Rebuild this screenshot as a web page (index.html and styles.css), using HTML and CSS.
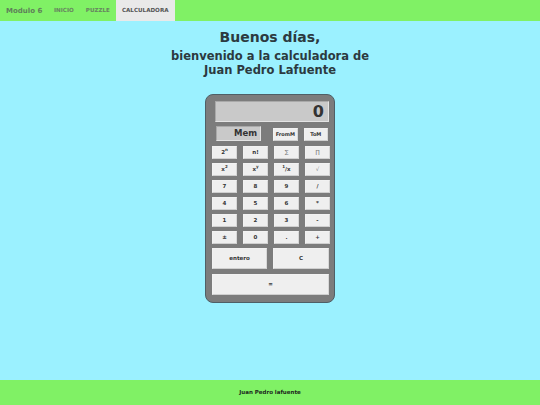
FILE: index.html
```html
<!DOCTYPE html>
<html lang="es">
<head>
<meta charset="utf-8">
<title>Calculadora</title>
<link rel="stylesheet" href="styles.css">
</head>
<body>
<header class="nav">
  <span class="brand">Modulo 6</span>
  <a class="link">INICIO</a>
  <a class="link">PUZZLE</a>
  <a class="link active">CALCULADORA</a>
</header>
<main class="main">
  <h1 class="hello">Buenos días,</h1>
  <h2 class="welcome">bienvenido a la calculadora de<br>Juan Pedro Lafuente</h2>
  <div class="calc">
    <div class="screen">0</div>
    <div class="memrow">
      <div class="mem">Mem</div>
      <button class="key mbtn">FromM</button>
      <button class="key mbtn">ToM</button>
    </div>
    <div class="keys">
      <button class="key">2<sup>n</sup></button><button class="key">n!</button><button class="key light">∑</button><button class="key light">∏</button>
      <button class="key">x<sup>2</sup></button><button class="key">x<sup>y</sup></button><button class="key"><sup>1</sup>/x</button><button class="key light">√</button>
      <button class="key">7</button><button class="key">8</button><button class="key">9</button><button class="key">/</button>
      <button class="key">4</button><button class="key">5</button><button class="key">6</button><button class="key">*</button>
      <button class="key">1</button><button class="key">2</button><button class="key">3</button><button class="key">-</button>
      <button class="key">±</button><button class="key">0</button><button class="key">.</button><button class="key">+</button>
    </div>
    <div class="bottom">
      <button class="key big">entero</button>
      <button class="key big">C</button>
      <button class="key big wide">=</button>
    </div>
  </div>
</main>
<footer class="foot">Juan Pedro lafuente</footer>
</body>
</html>
```
FILE: styles.css
```css
* { box-sizing: border-box; }
html, body { margin: 0; height: 100%; }
body {
  display: flex;
  flex-direction: column;
  height: 405px;
  overflow: hidden;
  background: #9bf1ff;
  font-family: "DejaVu Sans", sans-serif;
  color: #2c3a40;
}
.nav {
  display: flex;
  align-items: center;
  height: 21px;
  background: #80f165;
  padding-left: 6px;
}
.brand { font-size: 7px; color: #5f7f5a; font-weight: 700; width: 42px; white-space: nowrap; }
.link {
  font-size: 5.6px;
  font-weight: 700;
  color: #678460;
  padding: 0 6px;
  line-height: 21px;
  white-space: nowrap;
}
.link.active { background: #e9e9e9; color: #555; }
.main { flex: 1; display: flex; flex-direction: column; align-items: center; }
.hello { margin: 7px 0 0; font-size: 14px; line-height: 18px; font-weight: 700; }
.welcome { margin: 3px 0 0; font-size: 11.5px; line-height: 14px; font-weight: 700; text-align: center; }
.calc {
  width: 130px;
  height: 209px;
  margin-top: 17px;
  background: #7c7c7c;
  border: 1px solid #4f5f66;
  border-radius: 8px;
  padding: 6px;
  display: flex;
  flex-direction: column;
}
.screen {
  height: 21px;
  margin: 0 0 0 3px;
  width: 114px;
  background: #c9c9c9;
  border: 1px solid #a9a9a9;
  border-right-color: #e4e4e4;
  border-bottom-color: #e4e4e4;
  font-size: 16px;
  line-height: 19px;
  font-weight: 700;
  text-align: right;
  padding-right: 4px;
  color: #333;
}
.memrow { display: flex; gap: 6px; margin: 4px 0 0 4px; align-items: flex-end; }
.mem {
  width: 46px;
  height: 15px;
  margin-right: 6px;
  background: #c9c9c9;
  border: 1px solid #a9a9a9;
  border-right-color: #e4e4e4;
  border-bottom-color: #e4e4e4;
  font-size: 8.5px;
  line-height: 13px;
  font-weight: 700;
  text-align: right;
  padding-right: 3px;
  color: #333;
}
.key {
  margin: 0;
  padding: 0;
  border: 1px solid #f2f2f2;
  border-right-color: #d8d8d8;
  border-bottom-color: #cfcfcf;
  background: #efefef;
  font-family: "DejaVu Sans", sans-serif;
  font-size: 5.5px;
  font-weight: 700;
  color: #333;
  height: 13px;
  line-height: 1;
}
.key sup { font-size: 4px; line-height: 0; }
.key.light { font-weight: 400; color: #777; }
.mbtn { width: 25px; height: 13px; font-size: 5px; }
.keys { display: grid; grid-template-columns: repeat(4, 25px); column-gap: 6px; row-gap: 4px; margin: 5px 0 0; }
.bottom { display: grid; grid-template-columns: 55px 56px; column-gap: 6px; row-gap: 5px; margin-top: 4px; }
.big { height: 21px; }
.wide { grid-column: 1 / 3; }
.foot {
  height: 25px;
  background: #80f165;
  font-size: 5.5px;
  font-weight: 700;
  line-height: 25px;
  text-align: center;
  color: #1d2a1d;
}
```
